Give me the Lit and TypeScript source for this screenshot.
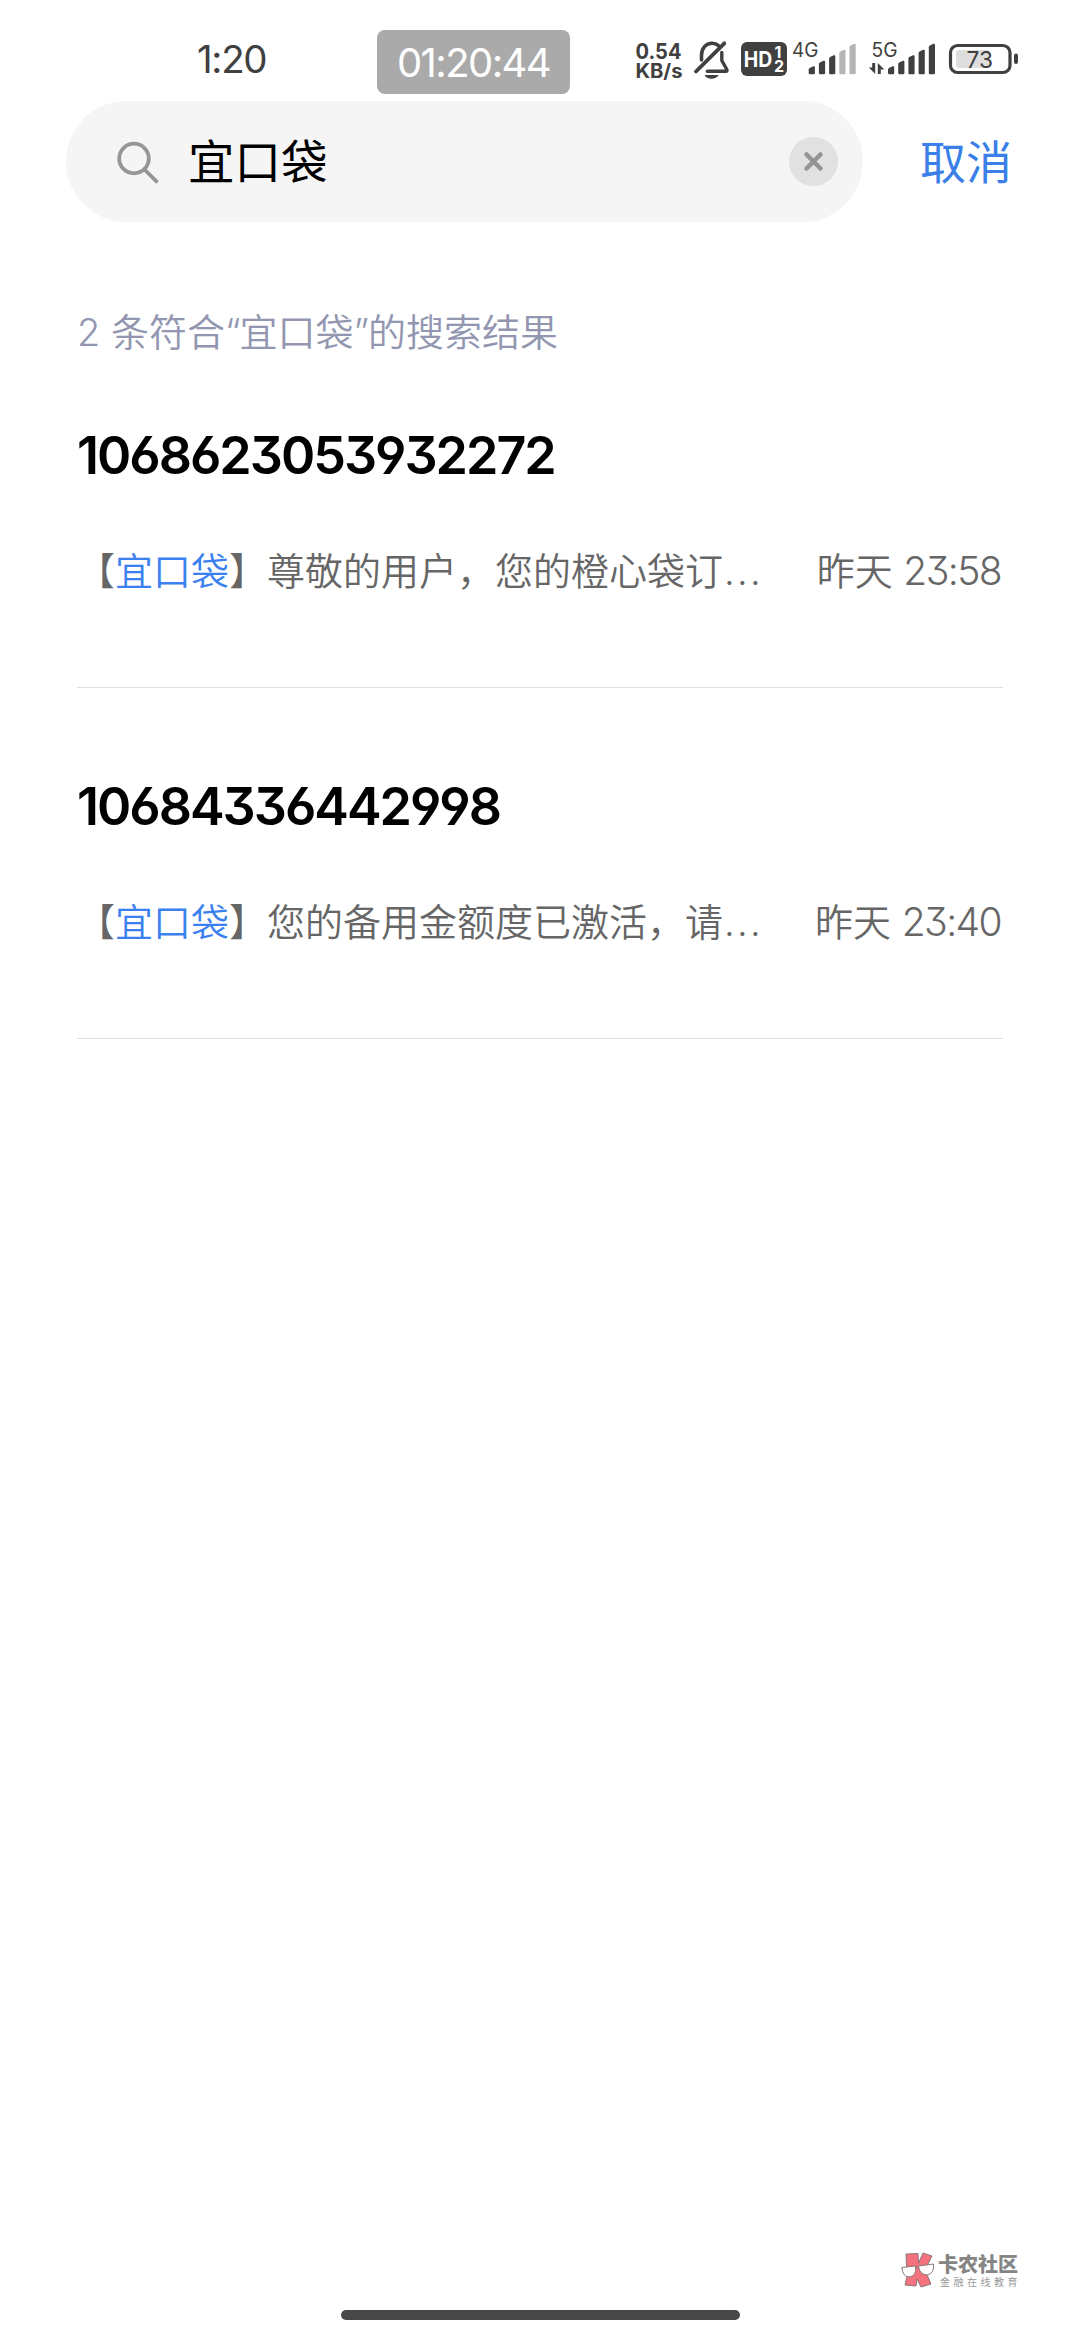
import { LitElement, html, css, svg } from "lit";
import { customElement, property } from "lit/decorators.js";

interface Message {
  number: string;
  keyword: string;
  preview: string;
  time: string;
}

const MESSAGES: Message[] = [
  { number: "1068623053932272", keyword: "宜口袋", preview: "尊敬的用户，您的橙心袋订", time: "23:58" },
  { number: "10684336442998", keyword: "宜口袋", preview: "您的备用金额度已激活，请", time: "23:40" },
];

const FONT = css`Inter, "Noto Sans CJK SC", sans-serif`;

/* Signal bars rise to the right and have slanted tops. */
const bars = (x0: number, lit: number) =>
  [66.5, 61, 55.5, 50, 44].map((top, i) => {
    const x = x0 + i * 10.2;
    return svg`<path fill=${i < lit ? "#404040" : "#b5b5b5"}
      d="M${x} 73V${top + 3.2}q0-1 1-1.6l3.6-1.8q1.6-.6 1.6 1V73q0 1.2-1.2 1.2h-3.8Q${x} 74.2 ${x} 73z"/>`;
  });

@customElement("status-bar")
export class StatusBar extends LitElement {
  static styles = css`
    :host { display: block; font-family: ${FONT}; color: #404040; }
    .bar { display: flex; height: 101px; align-items: flex-start; box-sizing: border-box; padding: 30px 56px 0 197px; }
    .clock { width: 180px; font-size: 38.5px; line-height: 59px; letter-spacing: -1.3px; font-weight: 400; }
    .timer { box-sizing: border-box; width: 193px; height: 64px; border-radius: 8px; background: #aaa; color: #fff; text-align: center; font-size: 40px; line-height: 65px; letter-spacing: -1.6px; white-space: nowrap; }
    .icons { display: flex; margin-left: 64px; }
    svg { display: block; flex: none; font-family: ${FONT}; }
  `;
  render() {
    return html`
      <div class="bar">
        <div class="clock">1:20</div>
        <div class="timer">01:20:44</div>
        <div class="icons">
          <svg width="56" height="60" viewBox="634 30 56 60" fill="#404040">
            <text x="635.5" y="59" font-size="21.5" font-weight="700" textLength="46" lengthAdjust="spacingAndGlyphs">0.54</text>
            <text x="635.5" y="77.6" font-size="19.5" font-weight="700" textLength="47" lengthAdjust="spacingAndGlyphs">KB/s</text>
          </svg>
          <svg width="50" height="60" viewBox="690 30 50 60" fill="none" stroke="#404040" stroke-width="3.6" stroke-linecap="round" stroke-linejoin="round">
            <path d="M724.3 43.300 696 71.500" stroke-width="3.800" />
            <path d="M701.500 60V55.500c0-7.500 4.500-12.200 10.500-12.200 2.600 0 4.800.8 6.500 2.300" />
            <path d="M721.800 52.500v8l5 9q.8 1.700-1 1.700h-18.500" stroke-width="3.400" />
            <path d="M704.500 75h14q-2 3.800-7 3.800t-7-3.800z" fill="#404040" stroke="none" />
          </svg>
          <svg width="52" height="60" viewBox="740 30 52 60">
            <rect x="741" y="42" width="46" height="34" rx="6" fill="#404040" />
            <g fill="#fff" font-weight="700">
              <text x="743.800" y="66.500" font-size="21" textLength="28.500" lengthAdjust="spacingAndGlyphs">HD</text>
              <text x="774.500" y="57.500" font-size="16">1</text>
              <text x="774" y="72" font-size="16">2</text>
            </g>
          </svg>
          <svg width="74" height="60" viewBox="792 30 74 60" fill="#404040">
            <text x="792" y="56.500" font-size="19.500" textLength="26.500" lengthAdjust="spacingAndGlyphs">4G</text>
            ${bars(808.7, 3)}
          </svg>
          <svg width="76" height="60" viewBox="866 30 76 60" fill="#404040">
            <text x="871.500" y="57" font-size="19.500" textLength="26" lengthAdjust="spacingAndGlyphs">5G</text>
            <path d="M875.200 63V74L868.800 67.500H872.200V63z" />
            <path d="M877.800 74V63L884.400 69.500H880.800V74z" />
            ${bars(888, 5)}
          </svg>
          <svg width="80" height="60" viewBox="942 30 80 60">
            <rect x="956" y="50" width="34" height="18" rx="3" fill="#dedede" />
            <rect x="950.500" y="45.500" width="59.500" height="27" rx="7" fill="none" stroke="#404040" stroke-width="3.200" />
            <rect x="1014" y="53.500" width="4" height="10.500" rx="2" fill="#404040" />
            <text x="966.500" y="68" font-size="23.500" fill="#404040" textLength="26.500" lengthAdjust="spacingAndGlyphs">73</text>
          </svg>
        </div>
      </div>
    `;
  }
}

@customElement("search-header")
export class SearchHeader extends LitElement {
  @property() query = "";
  static styles = css`
    :host { display: block; font-family: ${FONT}; }
    .row { display: flex; align-items: center; padding-left: 66px; height: 121px; }
    .field { display: flex; align-items: center; box-sizing: border-box; width: 797px; height: 121px; padding: 0 25px 0 48px; border-radius: 61px; background: #f5f5f5; }
    .query { flex: 1; margin-left: 26px; font-size: 46.500px; line-height: 60px; color: #000; }
    .cancel { margin-left: 57px; font-size: 46px; line-height: 60px; color: #3a80e8; }
    svg { display: block; flex: none; }
  `;
  render() {
    return html`
      <div class="row">
        <div class="field">
          <svg width="48" height="48" viewBox="114 137 48 48" fill="none" stroke="#969696" stroke-width="3.800">
            <circle cx="134" cy="157.500" r="14.800" />
            <path d="M144.500 168.500 157.500 181.300" />
          </svg>
          <div class="query">${this.query}</div>
          <svg width="49" height="49" viewBox="0 0 49 49">
            <circle cx="24.500" cy="24.500" r="24.500" fill="#e1e1e1" />
            <path d="M17.500 17.500 31.500 31.500M31.500 17.500 17.500 31.500" stroke="#949494" stroke-width="4.500" stroke-linecap="round" />
          </svg>
        </div>
        <div class="cancel">取消</div>
      </div>
    `;
  }
}

@customElement("message-row")
export class MessageRow extends LitElement {
  @property({ attribute: false }) message!: Message;
  static styles = css`
    :host { display: block; font-family: ${FONT}; }
    .row { box-sizing: border-box; height: 351px; padding-top: 87px; border-bottom: 1px solid #dedede; }
    .number { font-size: 52px; line-height: 64px; font-weight: 600; letter-spacing: -2px; color: #000; font-feature-settings: "cv03", "cv04", "cv09"; }
    .line { display: flex; justify-content: space-between; margin-top: 55px; font-size: 38px; line-height: 56px; color: #666; font-weight: 350; white-space: nowrap; }
    .keyword { color: #3a80f0; }
    .when { margin-right: 2px; }
    .digits { font-size: 39px; letter-spacing: -1.600px; font-feature-settings: "cv09"; }
    .dots { letter-spacing: 2.200px; margin-left: 1px; }
  `;
  render() {
    const m = this.message;
    return html`
      <div class="row">
        <div class="number">${m.number}</div>
        <div class="line">
          <span>【<span class="keyword">${m.keyword}</span>】${m.preview}<span class="dots">...</span></span>
          <span class="when">昨天 <span class="digits">${m.time}</span></span>
        </div>
      </div>
    `;
  }
}

@customElement("brand-mark")
export class BrandMark extends LitElement {
  static styles = css`
    :host { display: block; font-family: "Noto Sans CJK SC", sans-serif; }
    .mark { display: flex; }
    .words { display: flex; flex-direction: column; margin-left: 3px; color: #858585; white-space: nowrap; }
    .name { font-size: 20px; line-height: 23px; font-weight: 900; }
    .tag { font-size: 10px; line-height: 13px; letter-spacing: 3.500px; padding-left: 2px; color: #999; }
    svg { display: block; }
  `;
  render() {
    return html`
      <div class="mark">
        <svg width="34" height="37" viewBox="0 0 34 37" stroke="#8c7779" stroke-width="1">
          <path fill="#f4717e" d="M5 2 17 1.500 17.500 11 22 1 31 4 24 18 30 32 20 35 16 27 15 34 4 33 6 24z" />
          <path fill="#fff" d="M.8 15.500 14.500 14q1.500 10-6.500 11Q2 25 .8 15.500zM17.500 14 32.500 12q1 9-6 11-8 0-9-9z" />
          <path fill="none" d="M14.500 15.500q1.500-1.500 3 0" />
        </svg>
        <div class="words">
          <div class="name">卡农社区</div>
          <div class="tag">金融在线教育</div>
        </div>
      </div>
    `;
  }
}

@customElement("app-root")
export class AppRoot extends LitElement {
  static styles = css`
    :host { display: flex; flex-direction: column; box-sizing: border-box; width: 1080px; height: 2340px; overflow: hidden; background: #fff; font-family: ${FONT}; }
    .summary { margin: 82px 0 0 77px; font-size: 38px; line-height: 56px; height: 56px; color: #9296b0; font-weight: 350; white-space: nowrap; }
    .quote { letter-spacing: -1px; }
    .list { padding: 0 77px; margin-top: -23px; }
    .spacer { flex: 1; }
    .brand { align-self: flex-end; margin-right: 59px; height: 37px; }
    .home { align-self: center; width: 399px; height: 10.500px; margin: 21px 0 20px; border-radius: 6px; background: #484848; }
  `;
  render() {
    return html`
      <status-bar></status-bar>
      <search-header query="宜口袋"></search-header>
      <div class="summary">2 条符合<span class="quote">“</span>宜口袋<span class="quote">”</span>的搜索结果</div>
      <div class="list">
        ${MESSAGES.map((m) => html`<message-row .message=${m}></message-row>`)}
      </div>
      <div class="spacer"></div>
      <brand-mark class="brand"></brand-mark>
      <div class="home"></div>
    `;
  }
}
